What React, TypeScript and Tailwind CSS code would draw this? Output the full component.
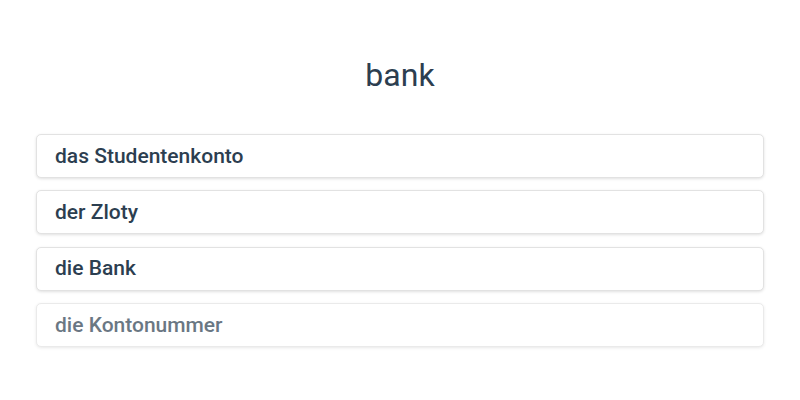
export default function App() {
  const items = ["das Studentenkonto", "der Zloty", "die Bank", "die Kontonummer"];
  return (
    <div className="w-[800px] h-[400px] bg-white" style={{ fontFamily: "Roboto, 'Noto Sans', sans-serif" }}>
      <div className="pt-[51px] text-center text-[32px] leading-[48px] text-[#2c3e50]">bank</div>
      <div className="mt-[35px] px-[36px] flex flex-col gap-[12.33px]">
        {items.map((t, i) => (
          <div
            key={t}
            className={`h-[44px] flex items-center pl-[18px] pt-[1px] rounded-[5px] border border-[#e2e2e2] bg-white shadow-[0_1px_3px_rgba(0,0,0,0.12)] text-[21px] font-medium text-[#2c3e50] ${i === 3 ? "opacity-70" : ""}`}
          >
            {t}
          </div>
        ))}
      </div>
    </div>
  );
}
